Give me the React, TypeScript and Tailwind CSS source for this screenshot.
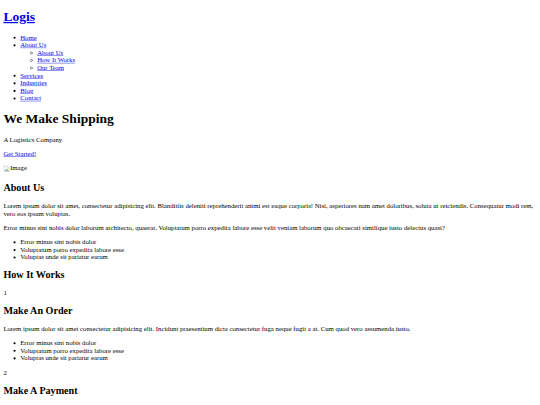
import React from "react";

const A = ({ children }: { children: React.ReactNode }) => (
  <a href="#" className="text-[#0000ee] underline">
    {children}
  </a>
);

const P = ({ children }: { children: React.ReactNode }) => <p className="my-[1em]">{children}</p>;
const H2 = ({ children }: { children: React.ReactNode }) => (
  <h2 className="text-[1.5em] font-bold my-[0.83em] leading-[normal]">{children}</h2>
);
const UL = ({ children }: { children: React.ReactNode }) => (
  <ul className="list-disc pl-[40px] my-[1em]">{children}</ul>
);

export default function App() {
  return (
    <div className="overflow-hidden bg-white">
      <div className="flow-root w-[1280px] origin-top-left scale-[0.421875]">
        <div className="m-[8px] font-['Liberation_Serif','Times_New_Roman',serif] text-[16px] leading-[normal] text-black">
          <header>
            <h1 className="text-[2em] font-bold my-[0.67em] leading-[normal]">
              <A>Logis</A>
            </h1>
            <nav>
              <UL>
                <li><A>Home</A></li>
                <li>
                  <A>About Us</A>
                  <ul className="list-[circle] pl-[40px]">
                    <li><A>About Us</A></li>
                    <li><A>How It Works</A></li>
                    <li><A>Our Team</A></li>
                  </ul>
                </li>
                <li><A>Services</A></li>
                <li><A>Industries</A></li>
                <li><A>Blog</A></li>
                <li><A>Contact</A></li>
              </UL>
            </nav>
          </header>
          <main>
            <section>
              <h1 className="text-[2em] font-bold my-[0.67em] leading-[normal]">We Make Shipping</h1>
              <P>A Logistics Company</P>
              <P><A>Get Started!</A></P>
              <P>
                <span className="inline-flex items-end">
                  <svg width="16" height="16" viewBox="0 0 16 16" className="inline-block">
                    <path d="M2 1.5h8l3.5 3.5v9.5h-11.5z" fill="#fff" stroke="#9aa0a6" strokeWidth="1" />
                    <path d="M3.5 12.5l3-4 2 2.5 1.5-1.5 2.5 3z" fill="#5aa05a" />
                    <circle cx="10.5" cy="6" r="1.2" fill="#4a90d9" />
                  </svg>
                  <span>Image</span>
                </span>
              </P>
            </section>
            <section>
              <H2>About Us</H2>
              <P>
                Lorem ipsum dolor sit amet, consectetur adipisicing elit. Blanditiis deleniti reprehenderit animi est eaque corporis! Nisi, asperiores nam amet doloribus, soluta ut reiciendis. Consequatur modi rem, vero eos ipsam voluptas.
              </P>
              <P>
                Error minus sint nobis dolor laborum architecto, quaerat. Voluptatum porro expedita labore esse velit veniam laborum quo obcaecati similique iusto delectus quasi?
              </P>
              <UL>
                <li>Error minus sint nobis dolor</li>
                <li>Voluptatum porro expedita labore esse</li>
                <li>Voluptas unde sit pariatur earum</li>
              </UL>
            </section>
            <section>
              <H2>How It Works</H2>
              <P>1</P>
              <H2>Make An Order</H2>
              <P>
                Lorem ipsum dolor sit amet consectetur adipisicing elit. Incidunt praesentium dicta consectetur fuga neque fugit a at. Cum quod vero assumenda iusto.
              </P>
              <UL>
                <li>Error minus sint nobis dolor</li>
                <li>Voluptatum porro expedita labore esse</li>
                <li>Voluptas unde sit pariatur earum</li>
              </UL>
              <P>2</P>
              <H2>Make A Payment</H2>
              <P>
                Lorem ipsum dolor sit amet consectetur adipisicing elit. Incidunt praesentium dicta consectetur fuga neque fugit a at. Cum quod vero assumenda iusto.
              </P>
            </section>
          </main>
        </div>
      </div>
    </div>
  );
}
